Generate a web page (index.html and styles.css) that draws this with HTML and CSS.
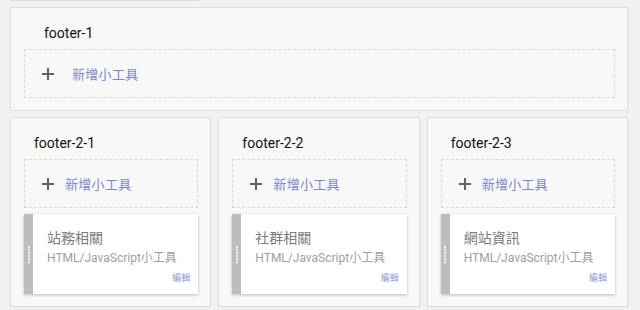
FILE: index.html
```html
<!DOCTYPE html>
<html lang="zh-Hant">
<head>
  <meta charset="UTF-8" />
  <title>版面配置</title>
  <link rel="stylesheet" href="styles.css">
</head>
<body>
  <div class="stub"></div>

  <div class="section">
    <div class="section-title wide">footer-1</div>
    <div class="add-widget wide">
      <span class="plus"></span>
      <span class="add-label">新增小工具</span>
    </div>
  </div>

  <div class="columns">
    <div class="section">
      <div class="section-title">footer-2-1</div>
      <div class="add-widget">
        <span class="plus"></span>
        <span class="add-label">新增小工具</span>
      </div>
      <div class="widget">
        <div class="handle"><span class="dots"></span></div>
        <div class="widget-body">
          <div class="widget-name">站務相關</div>
          <div class="widget-type">HTML/JavaScript小工具</div>
          <a class="edit" href="#">編輯</a>
        </div>
      </div>
    </div>

    <div class="section">
      <div class="section-title">footer-2-2</div>
      <div class="add-widget">
        <span class="plus"></span>
        <span class="add-label">新增小工具</span>
      </div>
      <div class="widget">
        <div class="handle"><span class="dots"></span></div>
        <div class="widget-body">
          <div class="widget-name">社群相關</div>
          <div class="widget-type">HTML/JavaScript小工具</div>
          <a class="edit" href="#">編輯</a>
        </div>
      </div>
    </div>

    <div class="section">
      <div class="section-title">footer-2-3</div>
      <div class="add-widget">
        <span class="plus"></span>
        <span class="add-label">新增小工具</span>
      </div>
      <div class="widget">
        <div class="handle"><span class="dots"></span></div>
        <div class="widget-body">
          <div class="widget-name">網站資訊</div>
          <div class="widget-type">HTML/JavaScript小工具</div>
          <a class="edit" href="#">編輯</a>
        </div>
      </div>
    </div>
  </div>
</body>
</html>
```

FILE: styles.css
```css
body { margin: 0; padding: 0 12px 0 10px; background: #f1f1f1; font-family: Roboto, "Noto Sans CJK TC", sans-serif; }

.stub { width: 187px; height: 0; border: 1px solid #dcdcdc; border-top: none; margin-bottom: 6px; background: #f8f8f8; }

.section { background: #f8f8f8; border: 1px solid #dcdcdc; padding: 0 12px 12px 13px; }
.section-title { height: 41px; box-sizing: border-box; padding: 16px 0 0 10px; font-size: 14px; line-height: 18px; color: #111; }
.section-title.wide { padding-left: 20px; }

.add-widget { height: 49px; box-sizing: border-box; border: 1px dashed #d6d6d6; display: flex; align-items: center; padding-left: 17px; }
.plus { position: relative; width: 12px; height: 12px; margin-right: 11px; }
.plus::before, .plus::after { content: ""; position: absolute; background: #616161; }
.plus::before { left: 0; top: 5px; width: 12px; height: 2px; }
.plus::after { left: 5px; top: 0; width: 2px; height: 12px; }
.add-widget.wide .plus { margin-right: 18px; }
.add-label { font-size: 13px; color: #7986cb; letter-spacing: 0.3px; }

.columns { display: grid; grid-template-columns: 1fr 1fr 1fr; gap: 7px; margin-top: 6px; }

.widget { display: flex; height: 80px; margin-top: 6px; box-shadow: 0 1px 3px rgba(0,0,0,0.25); }
.handle { width: 9px; background: #bdbdbd; display: flex; align-items: center; justify-content: center; }
.dots { width: 2px; height: 17px; background: repeating-linear-gradient(#f5f5f5 0 2px, transparent 2px 3px); }
.widget-body { flex: 1; background: #fff; padding: 15px 8px 0 14px; }
.widget-name { font-size: 14px; line-height: 18px; color: #7a7a7a; }
.widget-type { font-size: 12px; line-height: 16px; color: #9e9e9e; margin-top: 3px; }
.edit { display: block; text-align: right; font-size: 9px; color: #8c9bd6; text-decoration: none; margin-top: 5px; }
```
